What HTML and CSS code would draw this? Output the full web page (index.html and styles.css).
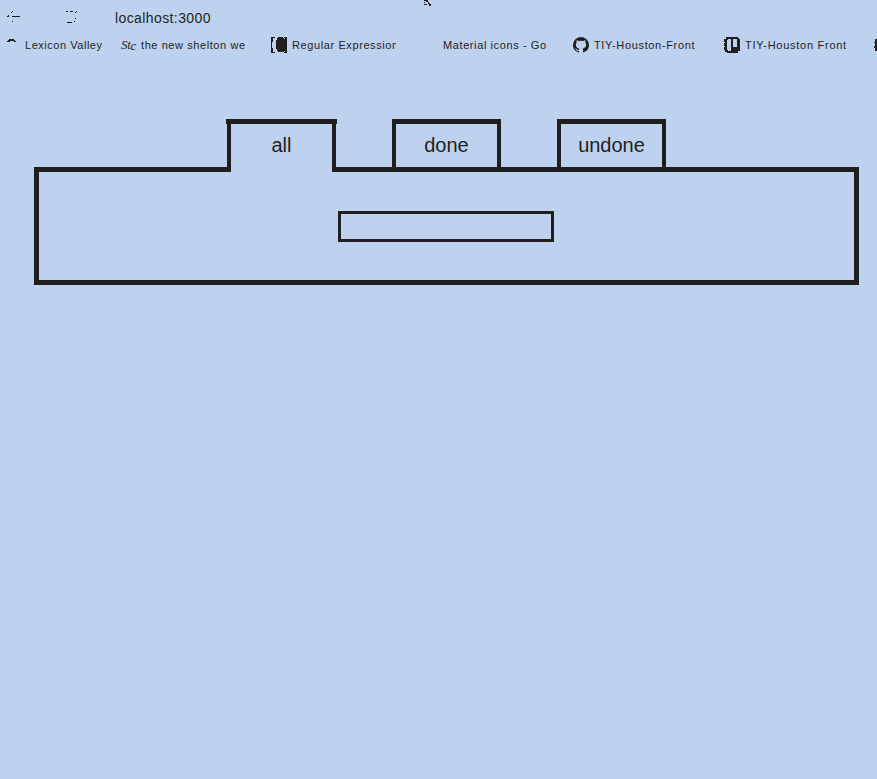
FILE: index.html
```
<!DOCTYPE html>
<html lang="en">
<head>
<meta charset="utf-8">
<title>localhost:3000</title>
<link rel="stylesheet" href="styles.css">
</head>
<body>
<header class="browser">
  <div class="toolbar">
    <svg class="back" width="14" height="12" viewBox="0 0 14 12" shape-rendering="crispEdges"><path d="M5 5.5h8M0 5.5h2M1 4.5h1M4 1.5h1M5 .5h1M5 10.5h1"/></svg>
    <svg class="reload" width="12" height="12" viewBox="0 0 12 12" shape-rendering="crispEdges"><path d="M0 .5h2M4 .5h3M10 .5h1M9 1.5h1M1 11.5h5M8 10.5h1M9 7.5h1"/></svg>
    <span class="address">localhost:3000</span>
  </div>
  <nav class="bookmarks">
    <a class="bookmark"><svg class="icon arc" width="13" height="16" viewBox="0 0 13 16" shape-rendering="crispEdges"><path d="M2 2h5v1h1v1h1v1H7V4H3v1H0V4h1V3h1z"/></svg><span class="label lexicon">Lexicon Valley</span></a>
    <a class="bookmark"><svg class="icon" width="16" height="16" viewBox="0 0 16 16"><text class="script" x="0" y="12">St<tspan dy="1">c</tspan></text></svg><span class="label shelton">the new shelton we</span></a>
    <a class="bookmark"><svg class="icon" width="16" height="16" viewBox="0 0 16 16" shape-rendering="crispEdges"><path d="M0 0h4v1H2v4H1v6h1v4h2v1H0zM7 0h5l2 3V1h-1V0h3v16h-3v-1h1v-2l-2 2H7l-2-4V4z"/></svg><span class="label regular">Regular Expression</span></a>
    <a class="bookmark"><span class="icon"></span><span class="label material">Material icons - Go</span></a>
    <a class="bookmark"><svg class="icon" width="16" height="16" viewBox="0 0 16 16"><path d="M8 0a8 8 0 0 0-2.5 15.6c.4.1.5-.2.5-.4v-1.4c-2.2.5-2.7-.9-2.7-.9-.4-1-.9-1.2-.9-1.2-.7-.5.1-.5.1-.5.8.1 1.2.8 1.2.8.7 1.2 1.9.9 2.3.7.1-.5.3-.9.5-1.1-1.8-.2-3.6-.9-3.6-4 0-.9.3-1.6.8-2.2-.1-.2-.4-1 .1-2.1 0 0 .7-.2 2.2.8a7.7 7.7 0 0 1 4 0c1.5-1 2.2-.8 2.2-.8.4 1.1.2 1.9.1 2.1.5.6.8 1.3.8 2.2 0 3.1-1.9 3.8-3.6 4 .3.2.5.7.5 1.5v2.1c0 .2.1.5.5.4A8 8 0 0 0 8 0z"/></svg><span class="label front">TIY-Houston-Front</span></a>
    <a class="bookmark"><svg class="icon" width="16" height="16" viewBox="0 0 16 16" shape-rendering="crispEdges"><path fill-rule="evenodd" d="M2 0h12v1h1v1h1v12h-2v2H3v-1H1v-2H0v-3h1V9H0V6h1V5H0V2h2zM4 2v1H3v10h1v1h3V2zM9 2v8h4V2z"/></svg><span class="label board">TIY-Houston Front</span></a>
    <a class="bookmark"><svg class="icon" width="16" height="16" viewBox="0 0 16 16" shape-rendering="crispEdges"><path d="M1 2h15v12H1v-3H0V9h1V6H0V5h1z"/></svg></a>
  </nav>
  <svg class="cursor" width="8" height="6" viewBox="0 0 8 6" shape-rendering="crispEdges"><path d="M0 0h4v2h1v1h1v1h1v2H5V4H4V2H2V1H0zM0 2h1v1H0zM0 4h3v1H0z"/></svg>
</header>
<main>
  <div class="tabs">
    <button class="tab active">all</button>
    <button class="tab">done</button>
    <button class="tab">undone</button>
  </div>
  <section class="panel"><input class="entry" type="text" aria-label="New item"></section>
</main>
</body>
</html>
```

FILE: styles.css
```
* { box-sizing: border-box; }
body {
  margin: 0;
  min-height: 779px;
  background: #bed1ef;
  color: #1f1f1e;
  font-family: "Liberation Sans", Arial, sans-serif;
}
svg { display: block; flex: none; fill: #1f1f1e; }
.browser { position: relative; height: 119px; overflow: hidden; }
.toolbar { display: flex; height: 35px; padding: 11px 0 0 7px; }
.back, .reload { fill: none; stroke: #1f1f1e; }
.reload { margin-left: 45px; }
.address { margin-left: 37px; margin-top: -1px; font-size: 14px; line-height: 16px; letter-spacing: .4px; }
.bookmarks {
  display: grid;
  grid-template-columns: 114px 150px 151px 151px 151px 150px 16px;
  width: 883px;
  margin-left: 7px;
}
.bookmark { display: flex; align-items: center; height: 20px; }
.icon { flex: none; width: 16px; height: 16px; }
.arc { width: 13px; }
.script { font: italic 13px "Liberation Serif", serif; letter-spacing: -.3px; }
.label {
  margin-left: 5px;
  white-space: nowrap;
  font-size: 11px;
  line-height: 16px;
  letter-spacing: .6px;
}
.lexicon { letter-spacing: .53px; }
.shelton { margin-left: 4px; letter-spacing: .58px; }
.regular { width: 104px; overflow: hidden; }
.front { letter-spacing: .65px; }
.board { letter-spacing: .73px; }
.cursor { position: absolute; left: 424px; top: 0; }
.tabs { display: flex; gap: 56px; height: 48px; padding-left: 227px; }
.tab {
  position: relative;
  width: 109px;
  height: 48px;
  padding: 0 0 1px;
  border: 4px solid #1f1f1e;
  border-top-width: 5px;
  border-bottom: 0;
  border-radius: 0;
  background: #bed1ef;
  color: #1f1f1e;
  font: 20px/24px "Liberation Sans", Arial, sans-serif;
}
.active { height: 53px; padding-bottom: 6px; z-index: 1; }
.active::before {
  content: "";
  position: absolute;
  left: -5px;
  right: -5px;
  top: -5px;
  height: 5px;
  background: #1f1f1e;
}
.panel {
  width: 825px;
  height: 118px;
  margin-left: 34px;
  padding-top: 39px;
  border: 5px solid #1f1f1e;
}
.entry {
  display: block;
  width: 216px;
  height: 31px;
  margin: 0 auto 0 299px;
  padding: 0 4px;
  border: 3px solid #1f1f1e;
  border-radius: 0;
  background: transparent;
  outline: 0;
}
```
